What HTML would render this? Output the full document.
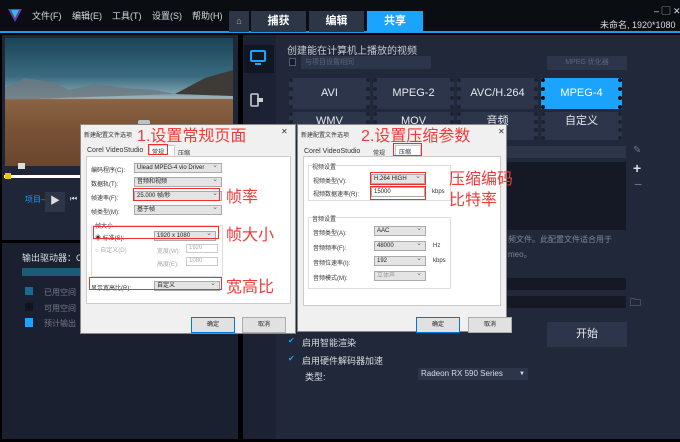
<!DOCTYPE html>
<html><head><meta charset="utf-8"><style>
*{margin:0;padding:0;box-sizing:border-box}
body{width:680px;height:442px;overflow:hidden;background:#000;font-family:"Liberation Sans","Noto Sans CJK SC",sans-serif;position:relative}
.a{position:absolute}
.t{color:#d8dde6;font-size:10px;white-space:nowrap}
.fb{position:absolute;background:#2c3549;color:#e6e9ef;font-size:11px;text-align:center;line-height:30px;border-left:4px dotted #1c2233;border-right:4px dotted #1c2233}
.dlg{position:absolute;background:#f0f0f0;border:1px solid #888;font-size:6px;color:#222}
.dlg .in{position:absolute;background:#fff;border:1px solid #ccc}
.sel{position:absolute;background:#e4e4e4;border:1px solid #aaa;height:10px;font-size:6px;line-height:9px;padding-left:2px}
.sel:after{content:"⌄";position:absolute;right:3px;top:-3px;font-size:7px;color:#666}
.lb{position:absolute;font-size:6px;color:#333;white-space:nowrap}
.red{position:absolute;border:1.5px solid #f03030}
.rt{position:absolute;color:#f23a3a;font-size:16px;white-space:nowrap}
.btn{position:absolute;background:#e1e1e1;border:1px solid #adadad;font-size:6px;text-align:center;line-height:14px;height:16px;width:44px}
</style></head><body>
<div class="a" style="left:0;top:0;width:680px;height:33px;background:#0a0d12"></div>
<div class="a" style="left:0;top:31px;width:680px;height:2px;background:#1a9cf0"></div>
<svg class="a" style="left:7px;top:7px" width="16" height="16"><polygon points="1,2 15,2 8,15" fill="#6a3db0"/><polygon points="4,3 12,3 8,11" fill="#2cc0d8"/></svg>
<div class="a t" style="left:32px;top:9px;font-size:9px">文件(F)</div>
<div class="a t" style="left:72px;top:9px;font-size:9px">编辑(E)</div>
<div class="a t" style="left:112px;top:9px;font-size:9px">工具(T)</div>
<div class="a t" style="left:152px;top:9px;font-size:9px">设置(S)</div>
<div class="a t" style="left:192px;top:9px;font-size:9px">帮助(H)</div>
<div class="a" style="left:229px;top:11px;width:20px;height:21px;background:#2d3647;color:#bbb;font-size:9px;text-align:center;line-height:21px">⌂</div>
<div class="a" style="left:251px;top:11px;width:55px;height:21px;background:#2d3647;color:#fff;font-size:11px;text-align:center;line-height:21px;font-weight:bold">捕获</div>
<div class="a" style="left:309px;top:11px;width:55px;height:21px;background:#2d3647;color:#fff;font-size:11px;text-align:center;line-height:21px;font-weight:bold">编辑</div>
<div class="a" style="left:367px;top:11px;width:56px;height:21px;background:#1aa3ff;color:#fff;font-size:11px;text-align:center;line-height:21px;font-weight:bold">共享</div>
<div class="a t" style="left:654px;top:4px;font-size:9px">– ▢ ✕</div>
<div class="a t" style="left:600px;top:18px;font-size:9px">未命名, 1920*1080</div>
<div class="a" style="left:2px;top:35px;width:236px;height:205px;background:#1f2638"></div>
<div class="a" style="left:5px;top:38px;width:228px;height:128px;background:linear-gradient(#1b4356 0%,#3a6b80 30%,#86a8b4 45%,#a5b7bc 47%,#8b6444 48%,#7a5236 70%,#6a4630 100%)"></div>
<svg class="a" style="left:5px;top:60px" width="228" height="50"><polygon points="0,28 20,18 45,22 65,30 90,24 120,28 150,30 170,34 0,40" fill="#6d7880" opacity=".8"/><polygon points="170,34 200,18 228,10 228,36" fill="#3e3a36"/></svg>
<div class="a" style="left:138px;top:120px;width:12px;height:5px;background:#b8c2c8;border-radius:2px"></div>
<div class="a" style="left:4px;top:175px;width:236px;height:3px;background:#fff"></div>
<div class="a" style="left:5px;top:173px;width:6px;height:6px;background:#f5c000"></div>
<div class="a" style="left:18px;top:163px;width:7px;height:6px;background:#ddd"></div>
<div class="a" style="left:25px;top:194px;color:#1a9cf0;font-size:8px">项目—</div>
<div class="a" style="left:45px;top:192px;width:20px;height:20px;background:#2d3647;color:#ddd;font-size:10px;text-align:center;line-height:20px">▶</div>
<div class="a t" style="left:70px;top:194px;font-size:8px">⏮</div>
<div class="a" style="left:2px;top:243px;width:236px;height:196px;background:#1a2030"></div>
<div class="a t" style="left:22px;top:251px;font-size:9px">输出驱动器：C</div>
<div class="a" style="left:22px;top:268px;width:60px;height:8px;background:#1e5a78"></div>
<div class="a" style="left:25px;top:287px;width:8px;height:8px;background:#1a6a96"></div>
<div class="a t" style="left:44px;top:287px;font-size:8px;color:#707a8c">已用空间</div>
<div class="a" style="left:25px;top:303px;width:8px;height:8px;background:#101420"></div>
<div class="a t" style="left:44px;top:303px;font-size:8px;color:#707a8c">可用空间</div>
<div class="a" style="left:25px;top:318px;width:8px;height:9px;background:#1aa3ff"></div>
<div class="a t" style="left:44px;top:318px;font-size:8px;color:#707a8c">预计输出</div>
<div class="a" style="left:243px;top:35px;width:437px;height:404px;background:#1c2233"></div>
<div class="a" style="left:276px;top:35px;width:404px;height:404px;background:#212839"></div>
<div class="a" style="left:244px;top:45px;width:30px;height:28px;background:#111722"></div>
<svg class="a" style="left:250px;top:50px" width="16" height="16"><rect x="1" y="1" width="14" height="10" rx="1" fill="none" stroke="#1aa3ff" stroke-width="2"/><rect x="5" y="13" width="6" height="2" fill="#1aa3ff"/></svg>
<svg class="a" style="left:249px;top:92px" width="16" height="16"><rect x="2" y="2" width="7" height="12" rx="1" fill="none" stroke="#ccc" stroke-width="1.6"/><rect x="8" y="6" width="6" height="4" fill="#ccc"/></svg>
<div class="a t" style="left:287px;top:42px;font-size:10px;color:#c6ccd6">创建能在计算机上播放的视频</div>
<div class="a" style="left:289px;top:58px;width:7px;height:8px;border:1px solid #555e70;background:#151a26"></div>
<div class="a" style="left:301px;top:56px;width:130px;height:13px;background:#2c3549;color:#5a6478;font-size:7px;padding-left:4px;line-height:13px">与项目设置相同</div>
<div class="a" style="left:547px;top:56px;width:80px;height:14px;background:#2c3549;color:#5a6478;font-size:7px;text-align:center;line-height:14px">MPEG 优化器</div>
<div class="fb" style="left:289px;top:78px;width:81px;height:31px">AVI</div>
<div class="fb" style="left:373px;top:78px;width:81px;height:31px">MPEG-2</div>
<div class="fb" style="left:457px;top:78px;width:81px;height:31px">AVC/H.264</div>
<div class="fb" style="left:541px;top:78px;width:81px;height:31px;background:#1aa3ff;color:#fff;border-color:#0b0e14">MPEG-4</div>
<div class="fb" style="left:289px;top:112px;width:81px;height:28px;line-height:18px">WMV</div>
<div class="fb" style="left:373px;top:112px;width:81px;height:28px;line-height:18px">MOV</div>
<div class="fb" style="left:457px;top:112px;width:81px;height:28px;line-height:18px">音频</div>
<div class="fb" style="left:541px;top:112px;width:81px;height:28px;line-height:18px">自定义</div>
<div class="a" style="left:500px;top:146px;width:126px;height:12px;background:#2c3549"></div>
<div class="a" style="left:500px;top:162px;width:126px;height:68px;background:#141925"></div>
<div class="a t" style="left:633px;top:145px;color:#6a7488">✎</div>
<div class="a t" style="left:633px;top:160px;font-size:14px;font-weight:bold">+</div>
<div class="a t" style="left:634px;top:176px;font-size:14px;color:#6a7488">−</div>
<div class="a t" style="left:508px;top:234px;font-size:8px;color:#7e8799">频文件。此配置文件适合用于</div>
<div class="a t" style="left:508px;top:249px;font-size:8px;color:#7e8799">meo。</div>
<div class="a" style="left:500px;top:278px;width:126px;height:12px;background:#141925"></div>
<div class="a" style="left:500px;top:296px;width:126px;height:12px;background:#141925"></div>
<div class="a t" style="left:630px;top:294px;font-size:11px;color:#aab">🗀</div>
<div class="a" style="left:547px;top:322px;width:80px;height:25px;background:#2c3549;color:#e6e9ef;font-size:11px;text-align:center;line-height:25px">开始</div>
<div class="a t" style="left:288px;top:336px;font-size:8px;color:#1aa3ff">✔</div>
<div class="a t" style="left:302px;top:336px;font-size:9px">启用智能渲染</div>
<div class="a t" style="left:288px;top:354px;font-size:8px;color:#1aa3ff">✔</div>
<div class="a t" style="left:302px;top:354px;font-size:9px">启用硬件解码器加速</div>
<div class="a t" style="left:305px;top:370px;font-size:9px">类型:</div>
<div class="a" style="left:418px;top:368px;width:110px;height:12px;background:#2c3549;color:#d8dde6;font-size:8px;line-height:12px;padding-left:3px">Radeon RX 590 Series<span style="position:absolute;right:3px;font-size:6px">▼</span></div>
<div class="dlg" style="left:80px;top:124px;width:216px;height:210px">
 <div class="lb" style="left:3px;top:5px">新建配置文件选项</div>
 <div class="lb" style="left:200px;top:2px;font-size:8px">✕</div>
 <div class="lb" style="left:6px;top:22px;font-size:7px">Corel VideoStudio</div>
 <div class="a" style="left:68px;top:20px;width:26px;height:12px;background:#fff;border:1px solid #ccc"></div>
 <div class="lb" style="left:71px;top:22px">常规</div>
 <div class="lb" style="left:97px;top:23px">压缩</div>
 <div class="in" style="left:5px;top:31px;width:205px;height:148px"></div>
 <div class="lb" style="left:10px;top:40px">编码程序(C):</div><div class="sel" style="left:53px;top:38px;width:88px">Ulead MPEG-4 vio Driver</div>
 <div class="lb" style="left:10px;top:54px">数据轨(T):</div><div class="sel" style="left:53px;top:52px;width:88px">音频和视频</div>
 <div class="lb" style="left:10px;top:68px">帧速率(F):</div><div class="sel" style="left:53px;top:66px;width:88px">25.000 帧/秒</div>
 <div class="lb" style="left:10px;top:82px">帧类型(M):</div><div class="sel" style="left:53px;top:80px;width:88px">基于帧</div>
 <div class="a" style="left:10px;top:100px;width:132px;height:52px;border:1px solid #ddd"></div>
 <div class="lb" style="left:14px;top:96px;background:#fff">帧大小</div>
 <div class="lb" style="left:14px;top:108px">◉ 标准(S):</div><div class="sel" style="left:73px;top:106px;width:62px">1920 x 1080</div>
 <div class="lb" style="left:14px;top:120px;color:#aaa">○ 自定义(D)</div>
 <div class="lb" style="left:76px;top:121px;color:#aaa">宽度(W):</div><div class="a" style="left:105px;top:119px;width:32px;height:9px;border:1px solid #ccc;font-size:6px;color:#aaa;padding-left:2px">1920</div>
 <div class="lb" style="left:76px;top:134px;color:#aaa">高度(E):</div><div class="a" style="left:105px;top:132px;width:32px;height:9px;border:1px solid #ccc;font-size:6px;color:#aaa;padding-left:2px">1080</div>
 <div class="lb" style="left:10px;top:158px">显示宽高比(R):</div><div class="sel" style="left:73px;top:156px;width:66px">自定义</div>
 <div class="btn" style="left:110px;top:192px;border-color:#0078d7">确定</div>
 <div class="btn" style="left:161px;top:192px">取消</div>
</div>
<div class="red" style="left:148px;top:144px;width:20px;height:11px"></div>
<div class="red" style="left:133px;top:188px;width:87px;height:13px"></div>
<div class="red" style="left:93px;top:226px;width:126px;height:13px"></div>
<div class="red" style="left:89px;top:277px;width:133px;height:13px"></div>
<div class="rt" style="left:137px;top:122px">1.设置常规页面</div>
<div class="rt" style="left:226px;top:183px">帧率</div>
<div class="rt" style="left:226px;top:221px">帧大小</div>
<div class="rt" style="left:226px;top:273px">宽高比</div>
<div class="dlg" style="left:297px;top:124px;width:210px;height:208px">
 <div class="lb" style="left:3px;top:5px">新建配置文件选项</div>
 <div class="lb" style="left:200px;top:2px;font-size:8px">✕</div>
 <div class="lb" style="left:6px;top:23px;font-size:7px">Corel VideoStudio</div>
 <div class="lb" style="left:75px;top:23px">常规</div>
 <div class="a" style="left:97px;top:20px;width:26px;height:12px;background:#fff;border:1px solid #ccc"></div>
 <div class="lb" style="left:101px;top:22px">压缩</div>
 <div class="in" style="left:5px;top:31px;width:198px;height:150px"></div>
 <div class="a" style="left:10px;top:40px;width:143px;height:36px;border:1px solid #ddd"></div>
 <div class="lb" style="left:14px;top:37px;background:#fff">视频设置</div>
 <div class="lb" style="left:15px;top:51px">视频类型(V):</div><div class="sel" style="left:73px;top:49px;width:54px">H.264 HIGH</div>
 <div class="lb" style="left:15px;top:64px">视频数据速率(R):</div><div class="a" style="left:73px;top:62px;width:54px;height:10px;border:1px solid #aaa;background:#fff;font-size:6px;padding-left:2px;line-height:9px">15000</div>
 <div class="lb" style="left:134px;top:64px">kbps</div>
 <div class="a" style="left:10px;top:92px;width:143px;height:72px;border:1px solid #ddd"></div>
 <div class="lb" style="left:14px;top:89px;background:#fff">音频设置</div>
 <div class="lb" style="left:15px;top:103px">音频类型(A):</div><div class="sel" style="left:76px;top:101px;width:52px">AAC</div>
 <div class="lb" style="left:15px;top:118px">音频频率(F):</div><div class="sel" style="left:76px;top:116px;width:52px">48000</div><div class="lb" style="left:135px;top:118px">Hz</div>
 <div class="lb" style="left:15px;top:133px">音频位速率(I):</div><div class="sel" style="left:76px;top:131px;width:52px">192</div><div class="lb" style="left:135px;top:133px">kbps</div>
 <div class="lb" style="left:15px;top:148px">音频模式(M):</div><div class="sel" style="left:76px;top:146px;width:52px;color:#999">立体声</div>
 <div class="btn" style="left:118px;top:192px;border-color:#0078d7">确定</div>
 <div class="btn" style="left:170px;top:192px">取消</div>
</div>
<div class="red" style="left:393px;top:143px;width:29px;height:13px"></div>
<div class="red" style="left:370px;top:172px;width:56px;height:13px"></div>
<div class="red" style="left:370px;top:186px;width:56px;height:14px"></div>
<div class="rt" style="left:361px;top:122px">2.设置压缩参数</div>
<div class="rt" style="left:449px;top:165px">压缩编码</div>
<div class="rt" style="left:449px;top:186px">比特率</div>
</body></html>
